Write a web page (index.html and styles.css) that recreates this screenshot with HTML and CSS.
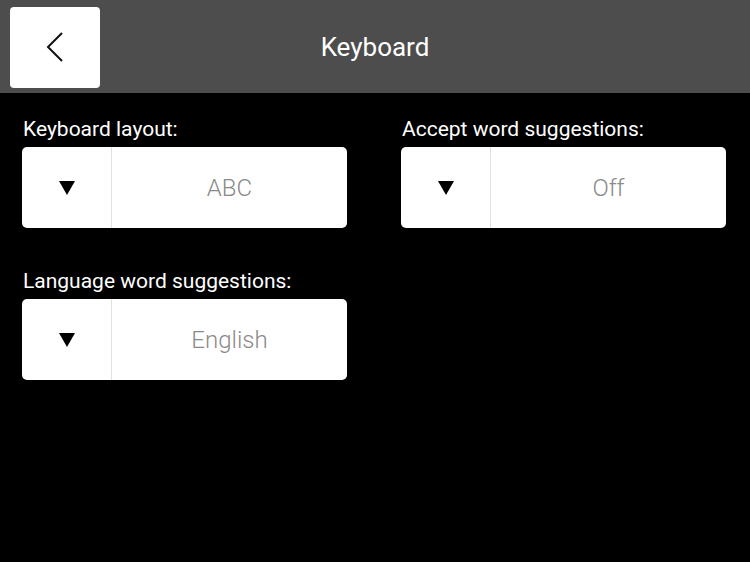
FILE: index.html
```html
<!DOCTYPE html>
<html>
<head>
<meta charset="utf-8">
<link rel="stylesheet" href="styles.css">
</head>
<body>
<header class="topbar">
  <button class="back" aria-label="Back">
    <svg width="18" height="30" viewBox="0 0 18 30"><path d="M16 1 L2 15 L16 29" fill="none" stroke="#111" stroke-width="2"/></svg>
  </button>
  <h1 class="title">Keyboard</h1>
</header>
<main class="settings">
  <div class="field">
    <div class="label">Keyboard layout:</div>
    <div class="select">
      <div class="arrow"><span class="tri"></span></div>
      <div class="value">ABC</div>
    </div>
  </div>
  <div class="field">
    <div class="label">Accept word suggestions:</div>
    <div class="select">
      <div class="arrow"><span class="tri"></span></div>
      <div class="value">Off</div>
    </div>
  </div>
  <div class="field">
    <div class="label">Language word suggestions:</div>
    <div class="select">
      <div class="arrow"><span class="tri"></span></div>
      <div class="value">English</div>
    </div>
  </div>
</main>
</body>
</html>
```
FILE: styles.css
```css
* { box-sizing: border-box; }
html, body { margin: 0; height: 100%; }
body {
  background: #000;
  font-family: Roboto, "Liberation Sans", sans-serif;
  color: #fff;
}
.topbar {
  height: 93px;
  background: #4d4d4d;
  display: flex;
  align-items: center;
  padding: 0 10px;
  position: relative;
}
.back {
  width: 90px;
  height: 81px;
  margin-top: 1px;
  background: #fff;
  border: 0;
  border-radius: 4px;
  display: flex;
  align-items: center;
  justify-content: center;
  padding: 0;
}
.title {
  position: absolute;
  left: 0;
  right: 0;
  text-align: center;
  margin: 0;
  font-size: 26px;
  font-weight: 400;
  pointer-events: none;
}
.settings {
  display: grid;
  grid-template-columns: 325px 325px;
  column-gap: 54px;
  row-gap: 39px;
  padding: 22px 0 0 22px;
}
.label {
  font-size: 21px;
  line-height: 28px;
  margin-bottom: 4px;
  padding-left: 1px;
}
.select {
  height: 81px;
  background: #fff;
  border-radius: 5px;
  display: flex;
}
.arrow {
  width: 90px;
  border-right: 1px solid #e2e2e2;
  display: flex;
  align-items: center;
  justify-content: center;
}
.tri {
  width: 0;
  height: 0;
  border-left: 8px solid transparent;
  border-right: 8px solid transparent;
  border-top: 14px solid #000;
  margin-top: 1px;
}
.value {
  flex: 1;
  display: flex;
  align-items: center;
  justify-content: center;
  color: #8a8a8a;
  font-size: 24px;
  font-weight: 300;
}
```
